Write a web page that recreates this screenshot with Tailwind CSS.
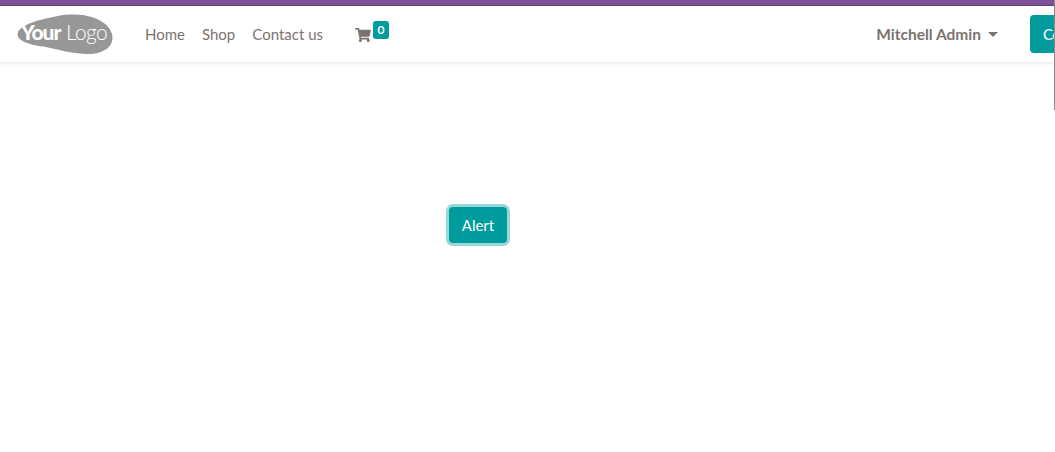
<!DOCTYPE html>
<html lang="en">
<head>
  <meta charset="UTF-8" />
  <title>Alert</title>
  <script src="https://cdn.jsdelivr.net/npm/@tailwindcss/browser@4"></script>
</head>
<body class="bg-white h-[452px] w-[1055px] overflow-hidden relative font-['Lato',sans-serif] text-[15px] text-[#7b7372]">
  <div class="h-[6px] bg-[#7c5197] border-b border-[#5f3f75]"></div>

  <header class="h-[56px] bg-white shadow-[0_1px_4px_rgba(0,0,0,0.12)] flex items-center pl-[18px] whitespace-nowrap">
    <svg class="w-[95px] h-[40px] shrink-0 overflow-visible" viewBox="0 0 95 40">
      <path d="M0 18C5 9 25 5 40 2C60-2 88 2 94 20C97 33 85 40 70 40C55 40 42 36 28 33C14 31-3 28 0 18Z" fill="#979797" />
      <text x="3" y="26" font-family="Lato" font-weight="900" font-size="21" letter-spacing="-1" fill="#fff">Your</text>
      <text x="48" y="26" font-family="Lato" font-weight="300" font-size="21" letter-spacing="-0.6" fill="#fff">Logo</text>
    </svg>

    <nav class="flex items-center gap-[17px] ml-8">
      <a href="#">Home</a>
      <a href="#">Shop</a>
      <a href="#">Contact us</a>
    </nav>

    <a href="#" class="flex ml-8 h-[38px] items-center relative">
      <svg class="w-[16px] h-[14px] mt-[1px]" viewBox="0 0 576 512" fill="#7b7372">
        <path d="M528 301l47-208c3-15-8-29-23-29H159l-9-47C148 7 138 0 127 0H24C11 0 0 11 0 24v16c0 13 11 24 24 24h70l70 343c-17 10-28 28-28 49 0 31 25 56 56 56s56-25 56-56c0-16-6-30-17-40h210c-11 10-17 24-17 40 0 31 25 56 56 56s56-25 56-56c0-22-13-41-31-50l5-24c3-15-8-29-23-29H213l-7-32h299c11 0 21-8 23-19z" />
      </svg>
      <span class="ml-[2px] -mt-[9px] w-[16px] h-[18px] rounded-[3px] bg-[#009b9d] text-white text-[12px] font-bold flex items-center justify-center">0</span>
    </a>

    <div class="ml-auto flex items-center">
      <a href="#" class="flex items-center font-bold text-[15.5px] pt-px">
        Mitchell Admin
        <span class="ml-[7px] border-t-[5px] border-x-[5px] border-t-[#7b7372] border-x-transparent"></span>
      </a>
      <a href="#" class="ml-[32px] w-[25px] h-[38px] pl-[13px] bg-[#009b9d] text-white tracking-[-0.5px] rounded-l-[4px] flex items-center overflow-hidden">Contact</a>
    </div>
  </header>

  <main class="pt-[145px] pl-[449px]">
    <button class="w-[58px] h-[36px] bg-[#009b9d] text-white rounded-[4px] shadow-[0_0_0_3px_rgba(0,155,157,0.4)]">Alert</button>
  </main>

  <div class="absolute right-0 top-0 w-px h-[110px] bg-[#8a8a8a]"></div>
</body>
</html>
